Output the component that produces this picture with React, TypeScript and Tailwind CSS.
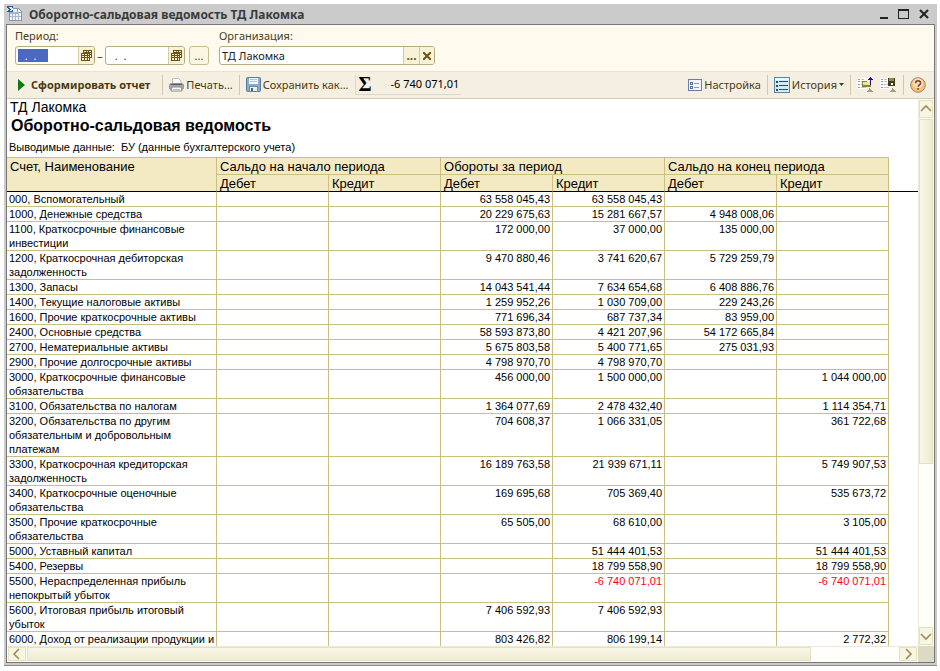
import type { ReactNode } from 'react';

type Row = { name: string; v: [string, string, string, string, string, string] };

const rows: Row[] = [
  { name: '000, Вспомогательный', v: ['', '', '63 558 045,43', '63 558 045,43', '', ''] },
  { name: '1000, Денежные средства', v: ['', '', '20 229 675,63', '15 281 667,57', '4 948 008,06', ''] },
  { name: '1100, Краткосрочные финансовые\nинвестиции', v: ['', '', '172 000,00', '37 000,00', '135 000,00', ''] },
  { name: '1200, Краткосрочная дебиторская\nзадолженность', v: ['', '', '9 470 880,46', '3 741 620,67', '5 729 259,79', ''] },
  { name: '1300, Запасы', v: ['', '', '14 043 541,44', '7 634 654,68', '6 408 886,76', ''] },
  { name: '1400, Текущие налоговые активы', v: ['', '', '1 259 952,26', '1 030 709,00', '229 243,26', ''] },
  { name: '1600, Прочие краткосрочные активы', v: ['', '', '771 696,34', '687 737,34', '83 959,00', ''] },
  { name: '2400, Основные средства', v: ['', '', '58 593 873,80', '4 421 207,96', '54 172 665,84', ''] },
  { name: '2700, Нематериальные активы', v: ['', '', '5 675 803,58', '5 400 771,65', '275 031,93', ''] },
  { name: '2900, Прочие долгосрочные активы', v: ['', '', '4 798 970,70', '4 798 970,70', '', ''] },
  { name: '3000, Краткосрочные финансовые\nобязательства', v: ['', '', '456 000,00', '1 500 000,00', '', '1 044 000,00'] },
  { name: '3100, Обязательства по налогам', v: ['', '', '1 364 077,69', '2 478 432,40', '', '1 114 354,71'] },
  { name: '3200, Обязательства по другим\nобязательным и добровольным\nплатежам', v: ['', '', '704 608,37', '1 066 331,05', '', '361 722,68'] },
  { name: '3300, Краткосрочная кредиторская\nзадолженность', v: ['', '', '16 189 763,58', '21 939 671,11', '', '5 749 907,53'] },
  { name: '3400, Краткосрочные оценочные\nобязательства', v: ['', '', '169 695,68', '705 369,40', '', '535 673,72'] },
  { name: '3500, Прочие краткосрочные\nобязательства', v: ['', '', '65 505,00', '68 610,00', '', '3 105,00'] },
  { name: '5000, Уставный капитал', v: ['', '', '', '51 444 401,53', '', '51 444 401,53'] },
  { name: '5400, Резервы', v: ['', '', '', '18 799 558,90', '', '18 799 558,90'] },
  { name: '5500, Нераспределенная прибыль\nнепокрытый убыток', v: ['', '', '', '-6 740 071,01', '', '-6 740 071,01'] },
  { name: '5600, Итоговая прибыль итоговый\nубыток', v: ['', '', '7 406 592,93', '7 406 592,93', '', ''] },
  { name: '6000, Доход от реализации продукции и', v: ['', '', '803 426,82', '806 199,14', '', '2 772,32'] },
];

const CalendarIcon = () => (
  <svg width="11" height="11" viewBox="0 0 11 11" shapeRendering="crispEdges">
    <path d="M2 0h9v8H9v3H0V3h2z" fill="#6b5310" />
    <path d="M1 4h2v1H1zM4 4h2v1H4zM7 4h1v1H7zM1 6h2v1H1zM4 6h2v1H4zM7 6h1v1H7zM1 8h2v2H1zM4 8h2v2H4zM7 8h1v2H7zM3 1h2v1H3zM6 1h1v1H6zM8 1h2v1H8zM9 3h1v1H9zM9 5h1v2H9z" fill="#f6f0cd" />
  </svg>
);

const ReportIcon = () => (
  <svg width="16" height="16" viewBox="0 0 16 16" shapeRendering="crispEdges">
    <path d="M2 2h9l4 4v9H2z" fill="#8795ad" />
    <path d="M3 3h7v4h4v7H3z" fill="#eef3fa" />
    <path d="M11 3l3 3h-3z" fill="#fff" />
    <path d="M3 6h8v2H3z" fill="#9fb4d8" />
    <path d="M5 6h1v8H5zM8 6h1v8H8zM11 6h1v8h-1zM3 10h11v1H3z" fill="#a9b8d2" />
    <path d="M0 0h6v6H0z" fill="#dfe8f4" />
    <path d="M0 0h6v2H5V1H2v1h1v1h1v1H3v1h2V4h1v2H0V5h1V4h1V3H1V2H0z" fill="#1c5f96" />
  </svg>
);

const PrinterIcon = () => (
  <svg width="15" height="14" viewBox="0 0 15 14">
    <path d="M3.500 6V.5h6L12 3v3" fill="#fdfdfd" stroke="#c0bfbd" />
    <rect x="0.500" y="5.500" width="14" height="6" rx="2" fill="#a9a9ac" stroke="#8f8f92" />
    <path d="M2 6.500h11" stroke="#5d5d60" />
    <path d="M3 9h9l1 4H2z" fill="#fafafa" stroke="#8d8d90" />
    <path d="M4 11.500h7" stroke="#c4c4c4" />
    <path d="M12 8.500h1.500" stroke="#f08030" />
  </svg>
);

const DiskIcon = () => (
  <svg width="15" height="15" viewBox="0 0 15 15">
    <rect x="0.500" y="0.500" width="14" height="14" rx="1" fill="#8fabc4" stroke="#567a9a" />
    <path d="M3 1h9v6H3z" fill="#f4f8fb" />
    <path d="M4 2.500h7M4 4.500h7" stroke="#b1c5d6" />
    <path d="M3.500 9.500h8v5h-8z" fill="#eef1f4" stroke="#6b88a3" />
    <path d="M5 11h2v3H5z" fill="#42617e" />
  </svg>
);

const SettingsIcon = () => (
  <svg width="14" height="12" viewBox="0 0 14 12" shapeRendering="crispEdges">
    <path d="M0 0h14v12H0z" fill="#6a7cae" />
    <path d="M1 1h12v10H1z" fill="#f3f6fd" />
    <path d="M2 3h3v3H2zM2 7h3v3H2z" fill="#5a6ea8" />
    <path d="M3 4h1v1H3zM3 8h1v1H3z" fill="#fff" />
    <path d="M6 4h5v1H6zM6 8h5v1H6z" fill="#8a99c2" />
  </svg>
);

const HistoryIcon = () => (
  <svg width="16" height="16" viewBox="0 0 16 16" shapeRendering="crispEdges">
    <path d="M0 0h16v16H0z" fill="#5b86a3" />
    <path d="M1 1h14v14H1z" fill="#d7eaf7" />
    <path d="M1 1h14v2H1z" fill="#edf6fc" />
    <path d="M2 4h2v2H2zM2 8h2v2H2zM2 12h2v2H2zM5 4h9v1H5zM5 8h9v1H5zM5 12h9v1H5z" fill="#1e4d6e" />
  </svg>
);

const ListIcon = ({ disk }: { disk?: boolean }) => (
  <svg width="17" height="17" viewBox="0 0 17 17" shapeRendering="crispEdges">
    <path d="M0 2h10v11H0z" fill="#fff" />
    <path d="M1 3h2v1H1zM1 5h2v1H1zM1 8h2v1H1zM1 11h2v1H1z" fill="#59b3bd" />
    <path d="M4 3h3v1H4zM4 5h3v1H4zM4 8h5v1H4zM4 11h5v1H4z" fill="#c3c3c3" />
    {disk ? (
      <>
        <path d="M8 2h7v8H8z" fill="#3e3e1d" />
        <path d="M9 2h5v3H9z" fill="#8d8d4d" />
        <path d="M11 7h2v2h-2z" fill="#fff" />
      </>
    ) : (
      <>
        <path d="M5 5h4l1 1h4v5H5z" fill="#8a8135" />
        <path d="M6 6h7v3H6z" fill="#f0e68a" />
        <path d="M13 1h1v1h1v1h1v1h-2v5h-1V4h-2V3h1V2h1z" fill="#18188c" />
      </>
    )}
    <path d="M12 12h1v1h1v1h1v1h1v1h-6v-1h1v-1h1z" fill="#a5a07c" />
  </svg>
);

const HelpIcon = () => (
  <svg width="16" height="16" viewBox="0 0 16 16">
    <circle cx="8" cy="8" r="7.300" fill="#fbbf7c" stroke="#a08468" />
    <circle cx="8" cy="6.500" r="5" fill="#fddcb4" />
    <path d="M5.600 6.200c0-3.200 5-3.200 5 0 0 1.700-2.500 1.800-2.500 3.600M8.100 11v1.700" fill="none" stroke="#6a4630" strokeWidth="1.500" />
  </svg>
);

const Chevron = ({ d }: { d: string }) => (
  <svg width="12" height="12" viewBox="0 0 12 12">
    <path d={d} fill="none" stroke="#9a8d5f" strokeWidth="1.600" />
  </svg>
);

const Sep = () => <span className="h-5 w-px shrink-0 bg-[#d0c9ae]" />;

const ToolButton = ({ children, label }: { children: ReactNode; label?: string }) => (
  <button type="button" aria-label={label} className="flex shrink-0 items-center gap-0.5 whitespace-nowrap text-[#4a3a10]">
    {children}
  </button>
);

const scrollBtn = 'flex shrink-0 items-center justify-center border border-[#e6e0bd] bg-[#f8f5e1]';
const line = 'border-[#c9bf7e]';
const head = `border-r border-b ${line} bg-[#f3eac4] px-[3px] pt-0.5 text-left font-normal`;

export default function App() {
  return (
    <div className="flex h-screen flex-col bg-white pt-1 pr-[3px] pb-[5px] pl-1 font-['Noto_Sans','Liberation_Sans',sans-serif] text-[11px] leading-[14px] text-black">
      <div className="flex min-h-0 flex-1 flex-col border-b border-[#8c8c8c] bg-[#cbcbcb] px-0.5 pb-0.5">
        <header className="flex h-5 shrink-0 items-center gap-1 pr-1.5 pl-px">
          <ReportIcon />
          <h1 className="flex-1 pt-0.5 pl-0.5 text-[12px] font-bold text-[#3a3a3a]">Оборотно-сальдовая ведомость ТД Лакомка</h1>
          <div className="flex items-center gap-2.5 text-[#222]">
            <button type="button" aria-label="Свернуть"><svg width="8" height="12" viewBox="0 0 8 12"><path d="M0 10h8" stroke="currentColor" strokeWidth="2" /></svg></button>
            <button type="button" aria-label="Развернуть"><svg width="11" height="12" viewBox="0 0 11 12"><path d="M0 1h11v10H0zM1 3v7h9V3z" fill="currentColor" fillRule="evenodd" /></svg></button>
            <button type="button" aria-label="Закрыть"><svg width="10" height="12" viewBox="0 0 10 12"><path d="M1 2l8 8M9 2l-8 8" stroke="currentColor" strokeWidth="2" /></svg></button>
          </div>
        </header>

        <main className="flex min-h-0 flex-1 flex-col border border-[#777] bg-white">
          <form className="flex h-[46px] shrink-0 items-start gap-2.5 bg-[#fffaee] px-2 pt-1 text-[#4a4020]">
            <div>
              <label htmlFor="from" className="block">Период:</label>
              <div className="mt-[3px] flex items-center">
                <div className="flex h-[19px] w-20 overflow-hidden rounded-[3px] border border-[#b5ad82] bg-white">
                  <div className="flex min-w-0 flex-1 items-center pl-0.5">
                    <input id="from" defaultValue=" .  .    " className="h-[13px] w-[30px] bg-[#4c68bf] pl-1 text-white" />
                  </div>
                  <button type="button" aria-label="Выбрать начало" className="flex w-4 items-center justify-center border-l border-[#d5cda2] bg-[#f8f3d8]"><CalendarIcon /></button>
                </div>
                <span className="w-2.5 text-center">–</span>
                <div className="flex h-[19px] w-20 overflow-hidden rounded-[3px] border border-[#b5ad82] bg-white">
                  <input aria-label="Конец периода" defaultValue=" .  ." className="min-w-0 flex-1 pl-1.5" />
                  <button type="button" aria-label="Выбрать конец" className="flex w-4 items-center justify-center border-l border-[#d5cda2] bg-[#f8f3d8]"><CalendarIcon /></button>
                </div>
                <button type="button" className="ml-1 h-[19px] w-5 rounded-[3px] border border-[#c5bd92] bg-[#faf6e0]">...</button>
              </div>
            </div>
            <div>
              <label htmlFor="org" className="block">Организация:</label>
              <div className="mt-[3px] flex h-[19px] w-[216px] overflow-hidden rounded-[3px] border border-[#b5ad82] bg-white">
                <input id="org" defaultValue="ТД Лакомка" className="min-w-0 flex-1 pl-0.5 text-[#222]" />
                <button type="button" aria-label="Выбрать" className="w-4 border-l border-[#d5cda2] bg-[#f8f3d8] text-[12px] font-bold text-[#6b5310]">...</button>
                <button type="button" aria-label="Очистить" className="flex w-[15px] items-center justify-center border-l border-[#d5cda2] bg-[#f8f3d8] text-[#6b5310]"><svg width="8" height="8" viewBox="0 0 8 8"><path d="M0 0l8 8M8 0L0 8" stroke="currentColor" strokeWidth="2" /></svg></button>
              </div>
            </div>
          </form>

          <div className="flex h-7 shrink-0 items-center gap-1.5 border-y border-t-[#e6e2d4] border-b-[#d3cbb8] bg-[#f5efe2] pr-2 pb-px pl-2.5">
            <button type="button" className="flex items-center gap-1.5 pr-1.5 whitespace-nowrap font-bold text-[#4a3a10]">
              <svg width="8" height="12" viewBox="0 0 8 12"><path d="M1 0l7 6-7 6z" fill="#0b7a14" /></svg>
              Сформировать отчет
            </button>
            <Sep />
            <ToolButton><PrinterIcon />Печать...</ToolButton>
            <Sep />
            <ToolButton><DiskIcon />Сохранить как...</ToolButton>
            <div className="flex h-5 items-center gap-4 border-b border-l border-[#dcd8cc] pr-0.5 pl-[3px] whitespace-nowrap">
              <span className="w-4 font-['Liberation_Serif',serif] text-[20px] leading-5 font-bold">Σ</span>
              <output>-6 740 071,01</output>
            </div>
            <span className="flex-1" />
            <ToolButton><SettingsIcon />Настройка</ToolButton>
            <Sep />
            <ToolButton><HistoryIcon />История<svg width="5" height="3" viewBox="0 0 5 3"><path d="M0 0h5L2.500 3z" fill="#4a3a10" /></svg></ToolButton>
            <Sep />
            <ToolButton label="Загрузить"><ListIcon /></ToolButton>
            <ToolButton label="Сохранить"><ListIcon disk /></ToolButton>
            <Sep />
            <ToolButton label="Справка"><HelpIcon /></ToolButton>
          </div>

          <div className="flex min-h-0 flex-1">
            <section className="min-w-0 flex-1 overflow-hidden font-['Liberation_Sans',Arial,sans-serif]">
              <p className="pt-px pl-[3px] text-[14px] leading-[14px]">ТД Лакомка</p>
              <h2 className="pl-1 text-[16px] leading-6 font-bold">Оборотно-сальдовая ведомость</h2>
              <p className="h-[19px] pl-0.5 leading-[18px] whitespace-pre">Выводимые данные:  БУ (данные бухгалтерского учета)</p>
              <table className="w-full table-fixed border-separate border-spacing-0">
                <colgroup>
                  <col className="w-[210px]" />
                  <col className="w-28" /><col className="w-28" /><col className="w-28" />
                  <col className="w-28" /><col className="w-28" /><col className="w-28" />
                  <col />
                </colgroup>
                <thead className="text-[13px] leading-[14px]">
                  <tr>
                    <th rowSpan={2} className={`${head} border-t border-b-black align-top`}>Счет, Наименование</th>
                    <th colSpan={2} className={`${head} border-t`}>Сальдо на начало периода</th>
                    <th colSpan={2} className={`${head} border-t`}>Обороты за период</th>
                    <th colSpan={2} className={`${head} border-t`}>Сальдо на конец периода</th>
                    <td rowSpan={2} className="border-b border-black" />
                  </tr>
                  <tr>
                    {['Дебет', 'Кредит', 'Дебет', 'Кредит', 'Дебет', 'Кредит'].map((t, i) => (
                      <th key={i} className={`${head} border-b-black`}>{t}</th>
                    ))}
                  </tr>
                </thead>
                <tbody>
                  {rows.map((r) => (
                    <tr key={r.name} className="align-top">
                      <td className={`border-r border-b ${line} pl-0.5 whitespace-pre`}>{r.name}</td>
                      {r.v.map((v, i) => (
                        <td key={i} className={`border-r border-b ${line} pr-0.5 text-right whitespace-nowrap ${v.startsWith('-') ? 'text-[#ff0010]' : ''}`}>{v}</td>
                      ))}
                    </tr>
                  ))}
                </tbody>
              </table>
            </section>
            <div className="flex w-4 shrink-0 flex-col gap-px border-l border-[#eeead5] bg-[#fffefa] py-px pr-px">
              <button type="button" aria-label="Вверх" className={`${scrollBtn} h-[18px]`}><Chevron d="M1 8l5-5 5 5" /></button>
              <div className="flex min-h-0 flex-1 flex-col"><div className="h-[68%] border border-[#e6e0bd] bg-linear-to-r from-[#f9f7e6] to-[#eeebd3]" /></div>
              <button type="button" aria-label="Вниз" className={`${scrollBtn} h-[18px]`}><Chevron d="M1 4l5 5 5-5" /></button>
            </div>
          </div>
          <div className="flex h-4 shrink-0">
            <div className="flex min-w-0 flex-1 gap-px border-t border-[#eeead5] bg-[#fffefa] px-px pb-px">
              <button type="button" aria-label="Влево" className={`${scrollBtn} w-[18px]`}><Chevron d="M8 1L3 6l5 5" /></button>
              <div className="flex min-w-0 flex-1"><div className="w-[90%] border border-[#e6e0bd] bg-linear-to-b from-[#f9f7e6] to-[#eeebd3]" /></div>
              <button type="button" aria-label="Вправо" className={`${scrollBtn} w-[18px]`}><Chevron d="M4 1l5 5-5 5" /></button>
            </div>
            <div className="w-4 bg-[#dcd9c4]" />
          </div>
        </main>
      </div>
    </div>
  );
}
